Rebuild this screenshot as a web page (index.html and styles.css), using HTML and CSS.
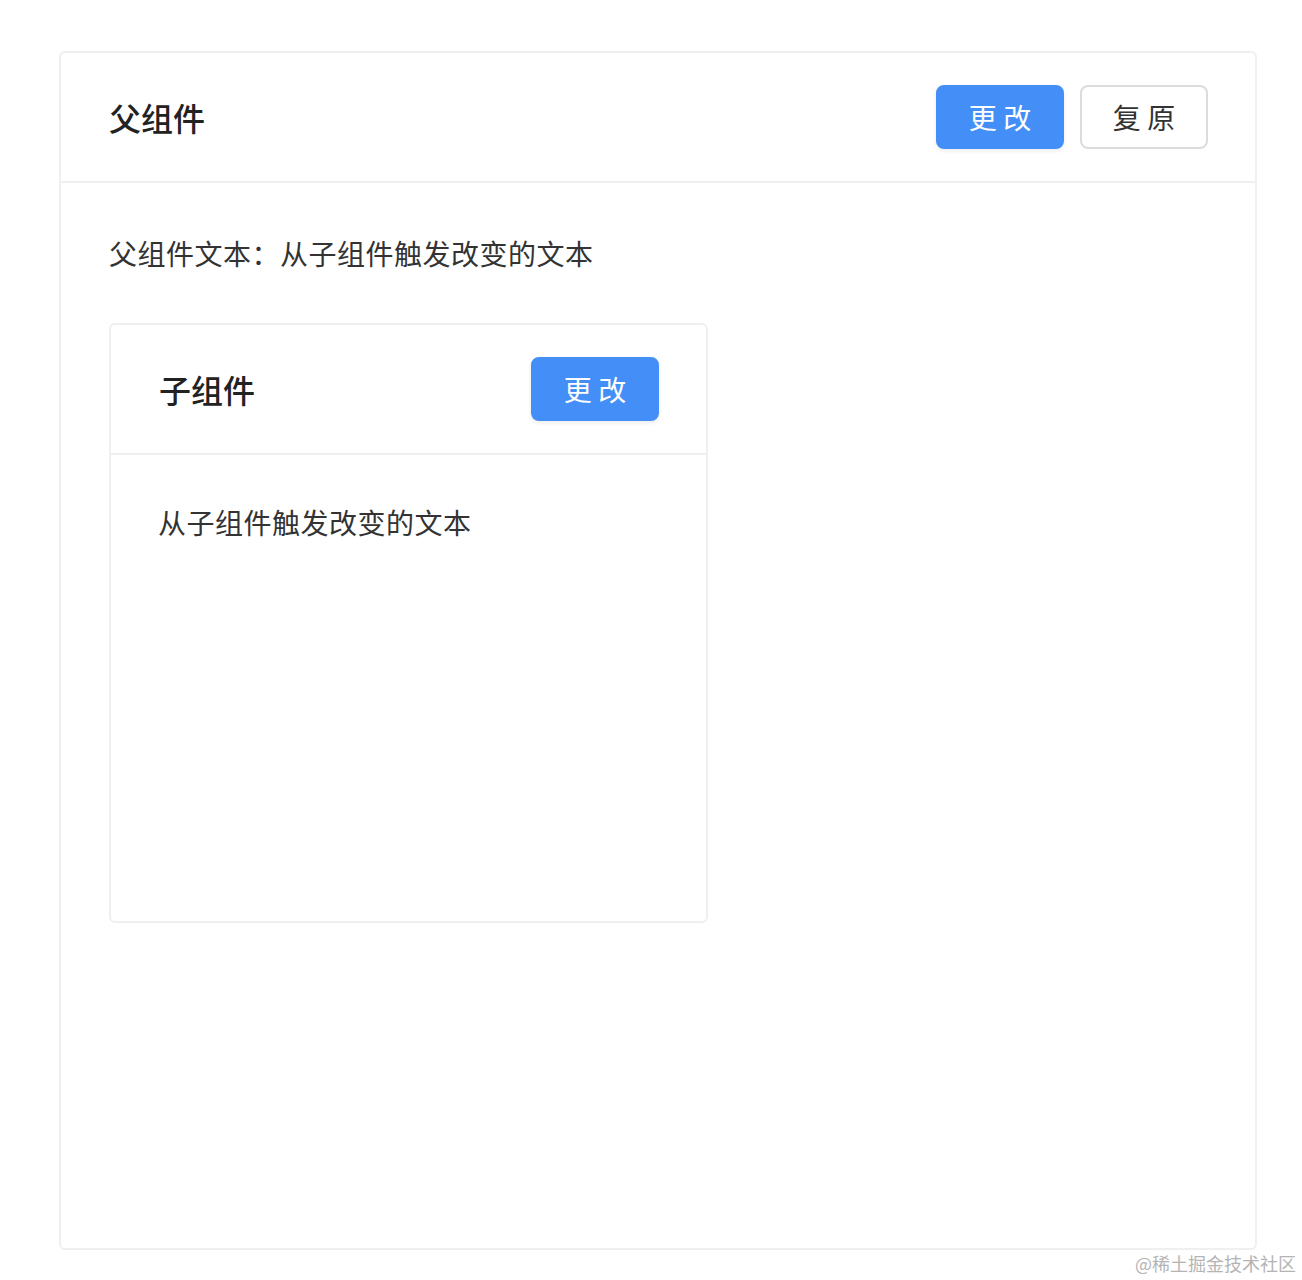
FILE: index.html
```html
<!DOCTYPE html>
<html lang="zh-CN">
<head>
    <meta charset="UTF-8">
    <meta name="viewport" content="width=device-width, initial-scale=1.0">
    <title>父子组件</title>
    <link rel="stylesheet" href="styles.css">
</head>
<body>
    <div class="card parent">
        <div class="card-header">
            <span class="card-title">父组件</span>
            <div class="actions">
                <button class="btn btn-primary" id="parent-change">更 改</button>
                <button class="btn" id="parent-reset">复 原</button>
            </div>
        </div>
        <div class="card-body">
            <p class="text">父组件文本：<span id="parent-text">从子组件触发改变的文本</span></p>

            <div class="card child">
                <div class="card-header">
                    <span class="card-title">子组件</span>
                    <button class="btn btn-primary" id="child-change">更 改</button>
                </div>
                <div class="card-body">
                    <p class="text" id="child-text">从子组件触发改变的文本</p>
                </div>
            </div>
        </div>
    </div>

    <div class="watermark">@稀土掘金技术社区</div>

    <script>
        const parentText = document.getElementById('parent-text');
        const childText = document.getElementById('child-text');

        function setText(value) {
            parentText.textContent = value;
            childText.textContent = value;
        }

        document.getElementById('parent-change').addEventListener('click', () => setText('从父组件触发改变的文本'));
        document.getElementById('child-change').addEventListener('click', () => setText('从子组件触发改变的文本'));
        document.getElementById('parent-reset').addEventListener('click', () => setText('原始文本'));
    </script>
</body>
</html>
```

FILE: styles.css
```css
body {
    margin: 0;
    background: #fff;
    font-family: "Noto Sans CJK SC", "Noto Sans", sans-serif;
    color: #303133;
}
.card {
    box-sizing: border-box;
    border: 2px solid #efefef;
    border-radius: 6px;
    background: #fff;
    display: flex;
    flex-direction: column;
}
.parent {
    width: 1198px;
    height: 1199px;
    margin: 51px 0 0 59px;
}
.child {
    width: 599px;
    height: 600px;
}
.card-header {
    display: flex;
    align-items: center;
    justify-content: space-between;
    padding: 32px 47px 32px 48px;
    border-bottom: 2px solid #efefef;
}
.card-title {
    font-size: 32px;
    font-weight: 500;
    color: #222;
    line-height: 64px;
}
.actions {
    display: flex;
    gap: 16px;
}
.card-body {
    padding: 48px;
}
.child .card-body {
    padding-left: 47px;
}
.text {
    margin: 0 0 48px;
    font-size: 28px;
    line-height: 44px;
    letter-spacing: 0.5px;
    color: #333;
}
.child .text {
    margin: 0;
    line-height: 38px;
}
.btn {
    box-sizing: border-box;
    width: 128px;
    height: 64px;
    padding: 0;
    border: 2px solid #dcdcdc;
    border-radius: 8px;
    background: #fff;
    color: #333;
    font-family: inherit;
    font-size: 28px;
    cursor: pointer;
}
.btn-primary {
    border-color: #448ef7;
    background: #448ef7;
    color: #fff;
    box-shadow: 0 2px 4px rgba(0, 0, 0, 0.08);
}
.btn-primary:hover {
    background: #5a9cf8;
}
.watermark {
    position: absolute;
    right: 6px;
    top: 1250px;
    font-size: 18px;
    line-height: 26px;
    color: #b4b4b4;
}
```
